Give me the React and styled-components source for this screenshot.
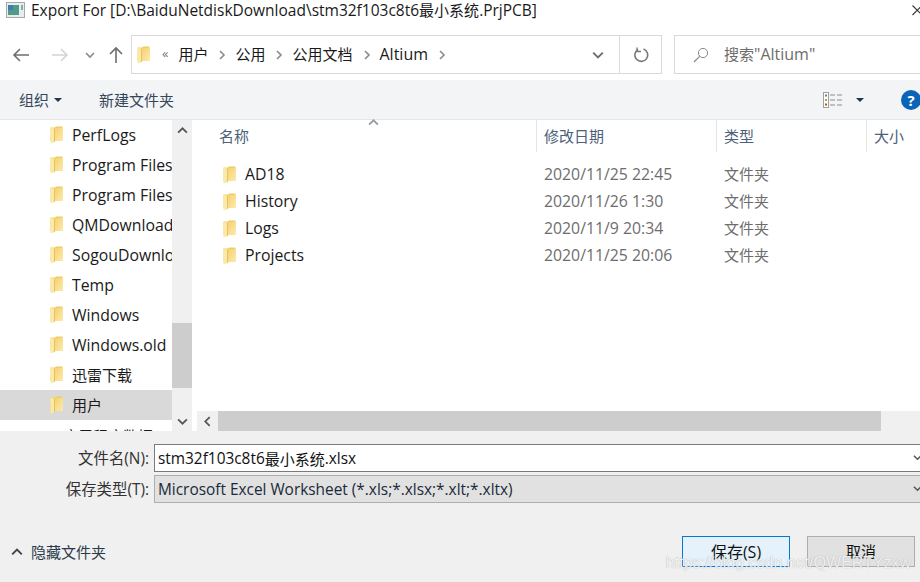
import React from 'react'
import styled, { createGlobalStyle } from 'styled-components'

const GlobalStyle = createGlobalStyle`
    html, body {
        margin: 0;
        padding: 0;
        overflow: hidden;
        background: #fff;
    }
    * { box-sizing: border-box; }
`

const sideItems = [
    { label: 'PerfLogs' },
    { label: 'Program Files' },
    { label: 'Program Files' },
    { label: 'QMDownload' },
    { label: 'SogouDownload' },
    { label: 'Temp' },
    { label: 'Windows' },
    { label: 'Windows.old' },
    { label: '迅雷下载', cjk: true },
    { label: '用户', cjk: true, active: true },
]

const files = [
    { name: 'AD18', date: '2020/11/25 22:45' },
    { name: 'History', date: '2020/11/26 1:30' },
    { name: 'Logs', date: '2020/11/9 20:34' },
    { name: 'Projects', date: '2020/11/25 20:06' },
]

const crumbs = ['用户', '公用', '公用文档', 'Altium']

const FolderIcon = () => (
    <svg width="13" height="18" viewBox="0 0 13 18">
        <defs>
            <linearGradient id="fold" x1="0" y1="0" x2="1" y2="1">
                <stop offset="0" stopColor="#f4d272" />
                <stop offset="1" stopColor="#fdeaac" />
            </linearGradient>
        </defs>
        <path d="M0.5 1.5h4.5l1-1h6.5v14.5h-12z" fill="#f0cc66" />
        <path d="M5 2h8v13h-8z" fill="url(#fold)" />
        <path d="M0.5 1.5l4.5 1.5v13l-4.5 1.5z" fill="#fce9a8" />
        <path d="M4.5 3v13" stroke="#e8c25c" strokeWidth="1" />
    </svg>
)

const Chevron = ({ dir = 'right', color = '#7a7a7a', size = 10 }) => {
    const paths = {
        right: 'M3 1l4 4-4 4',
        left: 'M7 1l-4 4 4 4',
        up: 'M1 7l4-4 4 4',
        down: 'M1 3l4 4 4-4',
    }
    return (
        <svg width={size} height={size} viewBox="0 0 10 10">
            <path d={paths[dir]} fill="none" stroke={color} strokeWidth="1.6" />
        </svg>
    )
}

const App = () => {
    return (
        <Dialog>
            <GlobalStyle />
            <TitleBar>
                <svg width="19" height="16" viewBox="0 0 19 16">
                    <rect x="0.5" y="0.5" width="18" height="15" fill="#e9ecec" stroke="#a9a9a9" />
                    <rect x="2" y="3" width="11" height="10" fill="#4f9a8c" />
                    <rect x="2" y="3" width="5" height="5" fill="#3d7fa6" />
                    <rect x="15" y="3" width="2" height="5" fill="#7fb0a8" />
                </svg>
                <span>Export For [D:\BaiduNetdiskDownload\stm32f103c8t6<Cjk>最小系统</Cjk>.PrjPCB]</span>
                <CloseMark width="8" height="12" viewBox="0 0 8 12">
                    <path d="M0.5 1.5L10 11M10 1.5L0.5 11" stroke="#333" strokeWidth="1.1" fill="none" />
                </CloseMark>
            </TitleBar>

            <NavRow>
                <NavButtons>
                    <svg width="18" height="16" viewBox="0 0 18 16">
                        <path d="M17 8H2M8 2L2 8l6 6" fill="none" stroke="#6e6e6e" strokeWidth="1.6" />
                    </svg>
                    <svg width="18" height="16" viewBox="0 0 18 16">
                        <path d="M1 8h15M10 2l6 6-6 6" fill="none" stroke="#d4d4d4" strokeWidth="1.6" />
                    </svg>
                    <Chevron dir="down" color="#8a8a8a" />
                    <svg width="14" height="18" viewBox="0 0 14 18">
                        <path d="M7 17V2M1 8l6-6 6 6" fill="none" stroke="#6e6e6e" strokeWidth="1.6" />
                    </svg>
                </NavButtons>
                <AddressBox>
                    <FolderIcon />
                    <Quote>«</Quote>
                    {crumbs.map((c) => (
                        <Crumb key={c} $latin={c === 'Altium'}>
                            <span>{c}</span>
                            <Chevron color="#8a8a8a" />
                        </Crumb>
                    ))}
                    <AddressEnd>
                        <DropPart>
                            <Chevron dir="down" color="#6e6e6e" size={12} />
                        </DropPart>
                        <RefreshPart>
                            <svg width="16" height="16" viewBox="0 0 16 16">
                                <path d="M5.2 2.4A6.4 6.4 0 1 0 10.5 2" fill="none" stroke="#7a7a7a" strokeWidth="1.6" />
                                <path d="M4 0.5v4h4" fill="none" stroke="#7a7a7a" strokeWidth="1.4" />
                            </svg>
                        </RefreshPart>
                    </AddressEnd>
                </AddressBox>
                <SearchBox>
                    <svg width="16" height="16" viewBox="0 0 16 16">
                        <circle cx="10" cy="6" r="4.6" fill="none" stroke="#8a8a8a" strokeWidth="1" />
                        <path d="M6.6 9.4L1 15" stroke="#8a8a8a" strokeWidth="1.2" />
                    </svg>
                    <span><Cjk>搜索</Cjk>"Altium"</span>
                </SearchBox>
            </NavRow>

            <Toolbar>
                <ToolLeft>
                    <OrganizeButton>
                        组织
                        <Caret />
                    </OrganizeButton>
                    <NewFolder>新建文件夹</NewFolder>
                </ToolLeft>
                <ToolRight>
                    <svg width="19" height="16" viewBox="0 0 19 16">
                        <rect x="0.5" y="0.5" width="5" height="15" fill="#fff" stroke="#a0a0a0" />
                        <rect x="2" y="2.5" width="2" height="2" fill="#4c8f9c" />
                        <rect x="2" y="7" width="2" height="2" fill="#b0a040" />
                        <rect x="2" y="11.5" width="2" height="2" fill="#b84a30" />
                        <path d="M7 3h5M14 3h5M7 8h5M14 8h5M7 13h5M14 13h5" stroke="#8c8c8c" strokeWidth="1" />
                    </svg>
                    <Caret />
                    <HelpBadge>?</HelpBadge>
                </ToolRight>
            </Toolbar>

            <Main>
                <Sidebar>
                    <SideList>
                        {sideItems.map((item, i) => (
                            <SideRow key={i} $active={item.active}>
                                <FolderIcon />
                                <SideLabel $cjk={item.cjk}>{item.label}</SideLabel>
                            </SideRow>
                        ))}
                        <SideRow>
                            <ClippedLabel>应用程序数据</ClippedLabel>
                        </SideRow>
                    </SideList>
                    <VScroll>
                        <ScrollEnd><Chevron dir="up" color="#555" size={11} /></ScrollEnd>
                        <VTrack>
                            <VThumb />
                        </VTrack>
                        <ScrollEnd><Chevron dir="down" color="#555" size={11} /></ScrollEnd>
                    </VScroll>
                </Sidebar>

                <FilePane>
                    <HeaderRow>
                        <SortMark>
                            <Chevron dir="up" color="#9a9a9a" size={11} />
                        </SortMark>
                        <HeaderCell $w={345} $pad={27}>名称</HeaderCell>
                        <HeaderCell $w={180}>修改日期</HeaderCell>
                        <HeaderCell $w={150}>类型</HeaderCell>
                        <HeaderCell $w={60} $last>大小</HeaderCell>
                    </HeaderRow>
                    <FileList>
                        {files.map((f) => (
                            <FileRow key={f.name}>
                                <NameCell>
                                    <FolderIcon />
                                    <span>{f.name}</span>
                                </NameCell>
                                <DateCell>{f.date}</DateCell>
                                <TypeCell>文件夹</TypeCell>
                            </FileRow>
                        ))}
                    </FileList>
                    <HScroll>
                        <HArrow><Chevron dir="left" color="#555" size={11} /></HArrow>
                        <HThumb />
                    </HScroll>
                </FilePane>
            </Main>

            <BottomPanel>
                <FormRow>
                    <FormLabel>文件名(N):</FormLabel>
                    <NameInput>stm32f103c8t6<Cjk>最小系统</Cjk>.xlsx<InputCaret><Chevron dir="down" color="#555" size={9} /></InputCaret></NameInput>
                </FormRow>
                <FormRow>
                    <FormLabel>保存类型(T):</FormLabel>
                    <TypeSelect>Microsoft Excel Worksheet (*.xls;*.xlsx;*.xlt;*.xltx)<InputCaret><Chevron dir="down" color="#555" size={9} /></InputCaret></TypeSelect>
                </FormRow>
                <ActionRow>
                    <HideFolders>
                        <Chevron dir="up" color="#444" size={12} />
                        <span>隐藏文件夹</span>
                    </HideFolders>
                    <Buttons>
                        <SaveButton>保存(S)</SaveButton>
                        <CancelButton>取消</CancelButton>
                    </Buttons>
                </ActionRow>
                <Watermark>https://blog.csdn.net/QWERTYzxw</Watermark>
            </BottomPanel>
        </Dialog>
    )
}

const Dialog = styled.div`
    position: relative;
    width: 920px;
    height: 582px;
    overflow: hidden;
    display: flex;
    flex-direction: column;
    background: #fff;
    color: #1a1a1a;
    font-family: "Open Sans", "Noto Sans CJK SC", sans-serif;
    font-size: 15px;
`

const Cjk = styled.span`
    font-size: 15px;
`

const TitleBar = styled.div`
    height: 35px;
    flex: none;
    display: flex;
    align-items: center;
    gap: 6px;
    padding: 0 0 15px 6px;
    font-size: 15.5px;
    span { white-space: nowrap; }
`

const CloseMark = styled.svg`
    margin-left: auto;
`

const NavRow = styled.div`
    height: 39px;
    flex: none;
    display: flex;
    align-items: stretch;
`

const NavButtons = styled.div`
    width: 131px;
    flex: none;
    display: flex;
    align-items: center;
    padding-left: 12px;
    svg:nth-child(1) { margin-right: 21px; }
    svg:nth-child(2) { margin-right: 16px; }
    svg:nth-child(3) { margin-right: 14px; }
`

const AddressBox = styled.div`
    width: 531px;
    flex: none;
    display: flex;
    align-items: center;
    border: 1px solid #d9d9d9;
    padding-left: 5px;
`

const Quote = styled.span`
    color: #777;
    margin: -3px 10px 0 12px;
    font-size: 13px;
`

const Crumb = styled.div`
    display: flex;
    align-items: center;
    gap: 9px;
    margin-right: 8px;
    white-space: nowrap;
    font-size: ${(p) => (p.$latin ? '16px' : '15px')};
    span { margin-top: -2px; }
`

const AddressEnd = styled.div`
    margin-left: auto;
    height: 100%;
    display: flex;
`

const DropPart = styled.div`
    width: 42px;
    display: flex;
    align-items: center;
    justify-content: center;
`

const RefreshPart = styled.div`
    width: 42px;
    display: flex;
    align-items: center;
    justify-content: center;
    border-left: 1px solid #d9d9d9;
`

const SearchBox = styled.div`
    margin-left: 12px;
    flex: 1;
    display: flex;
    align-items: center;
    gap: 15px;
    border: 1px solid #d9d9d9;
    border-right: none;
    padding-left: 18px;
    color: #6d6d6d;
    font-size: 16px;
    span { margin-top: -2px; }
`

const Toolbar = styled.div`
    height: 40px;
    margin-top: 6px;
    flex: none;
    display: flex;
    align-items: center;
    justify-content: space-between;
    background: #f3f4f6;
    border-bottom: 1px solid #e6e6e6;
    color: #35465a;
`

const ToolLeft = styled.div`
    display: flex;
    align-items: center;
    padding-left: 19px;
`

const OrganizeButton = styled.div`
    display: flex;
    align-items: center;
    gap: 5px;
    width: 80px;
`

const NewFolder = styled.div``

const Caret = styled.i`
    display: block;
    width: 0;
    height: 0;
    border-left: 4px solid transparent;
    border-right: 4px solid transparent;
    border-top: 4px solid #24364e;
`

const ToolRight = styled.div`
    display: flex;
    align-items: center;
    gap: 14px;
    margin-right: -1px;
`

const HelpBadge = styled.div`
    width: 20px;
    height: 20px;
    margin-left: 23px;
    border-radius: 50%;
    background: #0a64b8;
    color: #fff;
    font-size: 15px;
    font-weight: 700;
    line-height: 20px;
    text-align: center;
`

const Main = styled.div`
    height: 311px;
    flex: none;
    display: flex;
`

const Sidebar = styled.div`
    width: 192px;
    flex: none;
    display: flex;
    overflow: hidden;
`

const SideList = styled.div`
    width: 172px;
    flex: none;
`

const SideRow = styled.div`
    height: 30px;
    display: flex;
    align-items: center;
    padding-left: 50px;
    background: ${(p) => (p.$active ? '#d9d9d9' : 'transparent')};
`

const SideLabel = styled.span`
    margin-left: 9px;
    margin-top: ${(p) => (p.$cjk ? '-2px' : '-1px')};
    width: 100px;
    overflow: hidden;
    white-space: nowrap;
    font-size: ${(p) => (p.$cjk ? '15px' : '15.8px')};
`

const ClippedLabel = styled.span`
    margin-left: 13px;
    white-space: nowrap;
`

const VScroll = styled.div`
    width: 20px;
    flex: none;
    height: 311px;
    display: flex;
    flex-direction: column;
    background: #f0f0f0;
`

const ScrollEnd = styled.div`
    height: 20px;
    flex: none;
    display: flex;
    align-items: center;
    justify-content: center;
`

const VTrack = styled.div`
    flex: 1;
    display: flex;
    flex-direction: column;
    justify-content: flex-end;
    padding-bottom: 23px;
`

const VThumb = styled.div`
    height: 65px;
    background: #cdcdcd;
`

const FilePane = styled.div`
    flex: 1;
    min-width: 0;
    display: flex;
    flex-direction: column;
    position: relative;
`

const HeaderRow = styled.div`
    height: 32px;
    flex: none;
    display: flex;
    color: #4c607a;
`

const SortMark = styled.div`
    position: absolute;
    left: 176px;
    top: -3px;
    line-height: 0;
`

const HeaderCell = styled.div`
    width: ${(p) => p.$w}px;
    flex: none;
    padding-left: ${(p) => p.$pad || 7}px;
    padding-bottom: 2px;
    display: flex;
    align-items: center;
    border-right: ${(p) => (p.$last ? 'none' : '1px solid #e5e5e5')};
`

const FileList = styled.div`
    flex: 1;
    padding-top: 9px;
`

const FileRow = styled.div`
    height: 27px;
    display: flex;
    align-items: center;
    span, & > div:nth-child(n+2) { margin-top: -2px; }
    font-size: 15.8px;
`

const NameCell = styled.div`
    width: 352px;
    flex: none;
    padding-left: 31px;
    display: flex;
    align-items: center;
    gap: 9px;
`

const DateCell = styled.div`
    width: 180px;
    flex: none;
    color: #6d6d6d;
`

const TypeCell = styled.div`
    color: #6d6d6d;
    font-size: 15px;
`

const HScroll = styled.div`
    height: 20px;
    flex: none;
    margin-left: 5px;
    display: flex;
    background: #f0f0f0;
`

const HArrow = styled.div`
    width: 21px;
    flex: none;
    display: flex;
    align-items: center;
    justify-content: center;
`

const HThumb = styled.div`
    width: 663px;
    background: #cdcdcd;
`

const BottomPanel = styled.div`
    flex: 1;
    background: #f0f0f0;
    padding-top: 13px;
    display: flex;
    flex-direction: column;
    gap: 3px;
`

const FormRow = styled.div`
    height: 28px;
    flex: none;
    display: flex;
    align-items: stretch;
    font-size: 15.4px;
`

const FormLabel = styled.div`
    width: 149px;
    margin-right: 5px;
    padding-bottom: 2px;
    flex: none;
    display: flex;
    align-items: center;
    justify-content: flex-end;
    white-space: nowrap;
    color: #333;
`

const NameInput = styled.div`
    flex: 1;
    position: relative;
    display: flex;
    align-items: center;
    white-space: pre;
    padding-left: 3px;
    background: #fff;
    border: 1px solid #7a7a7a;
    border-right: none;
    color: #111;
`

const TypeSelect = styled(NameInput)`
    background: #e1e1e1;
    border-color: #adadad;
    color: #1a2a3a;
`

const InputCaret = styled.span`
    position: absolute;
    right: -2px;
    top: 8px;
    line-height: 0;
`

const ActionRow = styled.div`
    margin-top: 30px;
    display: flex;
    align-items: center;
    justify-content: space-between;
    padding: 0 5px 0 11px;
`

const HideFolders = styled.div`
    display: flex;
    align-items: center;
    gap: 8px;
    color: #2a3a4a;
`

const Buttons = styled.div`
    display: flex;
    gap: 17px;
`

const SaveButton = styled.div`
    width: 108px;
    height: 31px;
    padding-bottom: 2px;
    display: flex;
    align-items: center;
    justify-content: center;
    background: #e5f1fb;
    border: 1px solid #0078d7;
    color: #111;
    font-size: 16px;
`

const CancelButton = styled(SaveButton)`
    background: #e1e1e1;
    border-color: #adadad;
    font-size: 15px;
`

const Watermark = styled.div`
    position: absolute;
    right: 9px;
    bottom: 10px;
    font-family: "Liberation Sans", sans-serif;
    font-size: 16px;
    color: rgba(255, 255, 255, 0.85);
    text-shadow: 0 0 1px rgba(110, 110, 110, 0.6);
    white-space: nowrap;
    pointer-events: none;
`

export default App
